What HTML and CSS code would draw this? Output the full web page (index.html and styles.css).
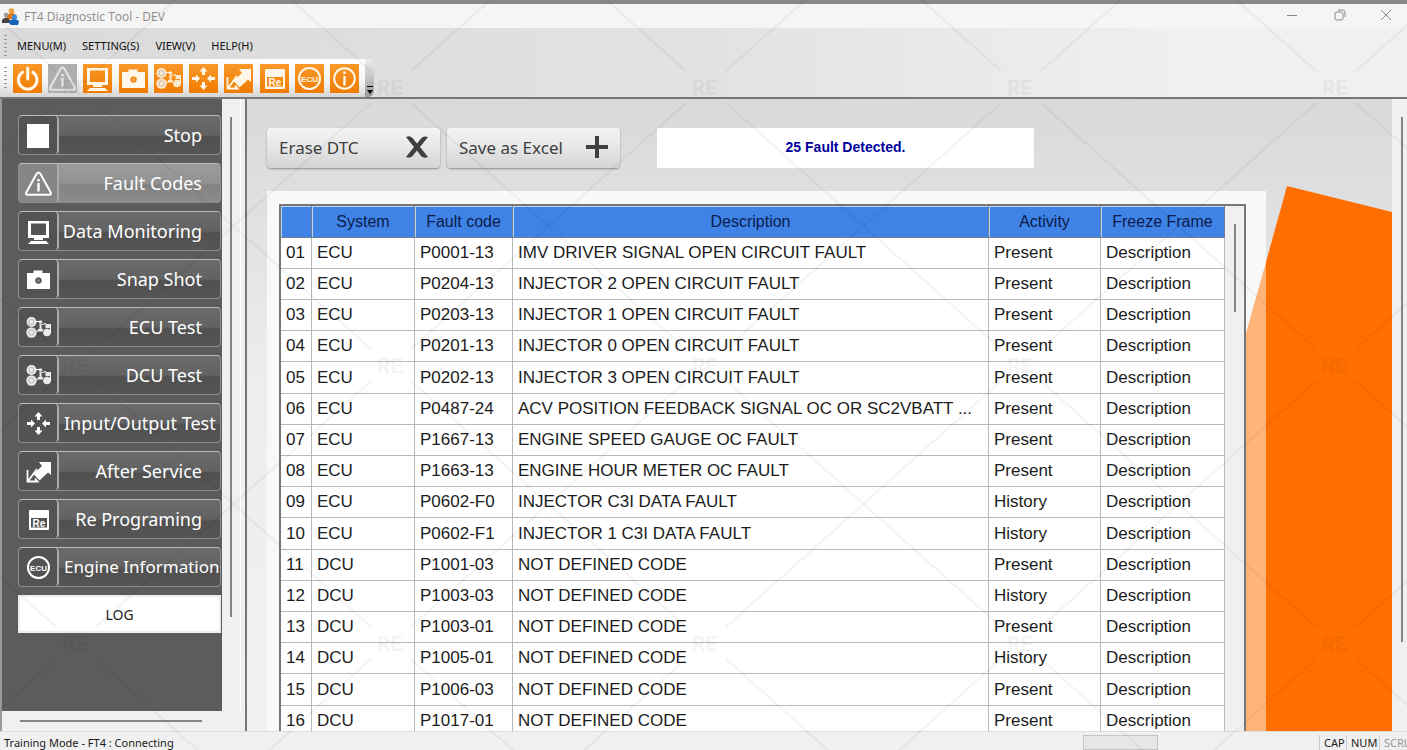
FILE: index.html
```html
<!DOCTYPE html>
<html lang="en">
<head>
    <meta charset="UTF-8">
    <meta name="viewport" content="width=device-width, initial-scale=1.0">
    <title>FT4 Diagnostic Tool - DEV</title>
    <link rel="stylesheet" href="styles.css">
</head>
<body>
    <!-- Icon set shared by the toolbar and the side menu -->
    <svg class="icon-defs" aria-hidden="true">
        <symbol id="i-power" viewBox="0 0 29 29">
            <path d="M9.5 8.2a9.3 9.3 0 1 0 10.4 0" fill="none" stroke="currentColor" stroke-width="3" stroke-linecap="round"/>
            <path d="M14.7 4v11" stroke="currentColor" stroke-width="3" stroke-linecap="round"/>
        </symbol>
        <symbol id="i-stop" viewBox="0 0 29 29"><rect x="3" y="3" width="22" height="24" fill="currentColor"/></symbol>
        <symbol id="i-warn" viewBox="0 0 29 29">
            <path d="M12.6 4.8 2.4 23.2q-1.2 2.6 1.4 2.6h21.4q2.6 0 1.4-2.6L16.4 4.8q-1.9-2.4-3.8 0z" fill="none" stroke="currentColor" stroke-width="2"/>
            <path d="M14.5 10v2.4M14.5 14v8.5" stroke="currentColor" stroke-width="2.4"/>
        </symbol>
        <symbol id="i-monitor" viewBox="0 0 29 29">
            <path d="M4 4h21v17H4zM7 6.5v11.5h15V6.5z" fill="currentColor" fill-rule="evenodd"/>
            <path d="M10 21h9v2h-9zM7 24h15l3 3H4z" fill="currentColor"/>
        </symbol>
        <symbol id="i-camera" viewBox="0 0 29 29">
            <path d="M3 8h6.500V5.500h9V8H26v16H3zM14.500 12.200a3.300 3.300 0 1 0 .01 0z" fill="currentColor" fill-rule="evenodd"/>
            <circle cx="14.500" cy="15.500" r="1.500" fill="currentColor" opacity=".3"/>
        </symbol>
        <symbol id="i-test" viewBox="0 0 29 29">
            <g fill="currentColor" opacity=".88">
                <circle cx="7.500" cy="9" r="5"/><circle cx="7.500" cy="19.500" r="5.200"/><circle cx="23" cy="19.500" r="3.800"/>
                <circle cx="16.500" cy="9" r="1.800"/><path d="M14 16h5v2.500h-5zM15.500 11h2v5h-2zM21.500 11H27v4h-5.500z"/>
            </g>
            <path d="M11 8.500h5M18 11.500l4-1M12 18.500l3-1M26.500 14v6" fill="none" stroke="currentColor"/>
            <g fill="none" stroke="#555" stroke-opacity=".35"><circle cx="7.500" cy="9" r="2.700"/><circle cx="7.500" cy="19.500" r="2.700"/></g>
        </symbol>
        <symbol id="i-move" viewBox="0 0 29 29">
            <path d="M14.500 3l4 4.500H16V11h-3V7.500h-2.500zM14.500 26l4-4.500H16V18h-3v3.500h-2.500zM18 14.500l4-4V13h4v3h-4v2.500zM11 14.500l-4-4V13H3v3h4v2.500z" fill="currentColor"/>
        </symbol>
        <symbol id="i-service" viewBox="0 0 29 29">
            <path d="M27 5v13l-3-2.500-8.500 8-6-6.500 8.500-8L15 5z" fill="currentColor"/>
            <path d="M3.500 13v11.500h10l-2.500-3M4.500 23.500 13 12" fill="none" stroke="currentColor" stroke-width="1.800"/>
        </symbol>
        <symbol id="i-re" viewBox="0 0 29 29">
            <path d="M6 5h18q1 0 1 1v18q0 1-1 1H6q-1 0-1-1V6q0-1 1-1zM7 13v9.500h16V13z" fill="currentColor" fill-rule="evenodd"/>
            <text x="15" y="21.500" font-family="Liberation Sans, sans-serif" font-size="10" font-weight="bold" text-anchor="middle" fill="currentColor">Re</text>
        </symbol>
        <symbol id="i-ecu" viewBox="0 0 29 29">
            <circle cx="14.500" cy="14.500" r="10.500" fill="none" stroke="currentColor" stroke-width="2"/>
            <text x="14.500" y="17.500" font-family="Liberation Sans, sans-serif" font-size="8" font-weight="bold" text-anchor="middle" fill="currentColor">ECU</text>
        </symbol>
        <symbol id="i-info" viewBox="0 0 29 29">
            <circle cx="14.500" cy="14.500" r="10.300" fill="none" stroke="currentColor" stroke-width="2"/>
            <path d="M14.500 7.500v2.500M14.500 12v9.500" stroke="currentColor" stroke-width="2.400"/>
        </symbol>
    </svg>

    <header class="titlebar">
        <svg class="app-icon" viewBox="0 0 17 17" aria-hidden="true">
            <circle cx="9.500" cy="3" r="2.800" fill="#f0a040"/>
            <path d="M5 11V7q5-4 9 0v4z" fill="#e07818"/>
            <circle cx="4" cy="7" r="2.200" fill="#999"/>
            <path d="M0 15v-3q4-5 8 0v3z" fill="#444"/>
            <circle cx="12.500" cy="9" r="2.600" fill="#3c8fe0"/>
            <path d="M7 15v-2q5-4 10 0l-1 4H9z" fill="#1763b5"/>
        </svg>
        <span class="app-name">FT4 Diagnostic Tool - DEV</span>
        <div class="window-buttons">
            <button type="button" aria-label="Minimize"><svg viewBox="0 0 12 12"><path d="M1 6.500h10"/></svg></button>
            <button type="button" aria-label="Restore"><svg viewBox="0 0 12 12"><rect x="1" y="3" width="8" height="8" rx="2"/><path d="M4 1h4.500q2.500 0 2.500 2.500V8"/></svg></button>
            <button type="button" aria-label="Close"><svg viewBox="0 0 12 12"><path d="M1 1l10 10M11 1L1 11"/></svg></button>
        </div>
    </header>

    <div class="bars">
        <nav class="menubar">
            <span class="grip"></span>
            <button type="button">MENU(M)</button>
            <button type="button">SETTING(S)</button>
            <button type="button">VIEW(V)</button>
            <button type="button">HELP(H)</button>
        </nav>
        <div class="toolbar">
            <span class="grip"></span>
            <div class="tools">
                <button type="button" class="tool" aria-label="Power"><svg><use href="#i-power"/></svg></button>
                <button type="button" class="tool disabled" aria-label="Fault Codes"><svg><use href="#i-warn"/></svg></button>
                <button type="button" class="tool" aria-label="Data Monitoring"><svg><use href="#i-monitor"/></svg></button>
                <button type="button" class="tool" aria-label="Snap Shot"><svg><use href="#i-camera"/></svg></button>
                <button type="button" class="tool" aria-label="Test"><svg><use href="#i-test"/></svg></button>
                <button type="button" class="tool" aria-label="Input/Output Test"><svg><use href="#i-move"/></svg></button>
                <button type="button" class="tool" aria-label="After Service"><svg><use href="#i-service"/></svg></button>
                <button type="button" class="tool" aria-label="Re Programing"><svg><use href="#i-re"/></svg></button>
                <button type="button" class="tool" aria-label="Engine Information"><svg><use href="#i-ecu"/></svg></button>
                <button type="button" class="tool" aria-label="Info"><svg><use href="#i-info"/></svg></button>
            </div>
            <button type="button" class="tool-more" aria-label="More"><svg viewBox="0 0 6 8"><path d="M0 0h6v1H0zM0 4h6L3 8z"/></svg></button>
        </div>
    </div>

    <main class="workspace">
        <aside class="sidebar">
            <div class="side-top">
                <nav class="side-menu">
                    <button type="button" class="side-btn"><span class="side-icon"><svg><use href="#i-stop"/></svg></span><span class="side-label">Stop</span></button>
                    <button type="button" class="side-btn active"><span class="side-icon"><svg><use href="#i-warn"/></svg></span><span class="side-label">Fault Codes</span></button>
                    <button type="button" class="side-btn"><span class="side-icon"><svg><use href="#i-monitor"/></svg></span><span class="side-label">Data Monitoring</span></button>
                    <button type="button" class="side-btn"><span class="side-icon"><svg><use href="#i-camera"/></svg></span><span class="side-label">Snap Shot</span></button>
                    <button type="button" class="side-btn"><span class="side-icon"><svg><use href="#i-test"/></svg></span><span class="side-label">ECU Test</span></button>
                    <button type="button" class="side-btn"><span class="side-icon"><svg><use href="#i-test"/></svg></span><span class="side-label">DCU Test</span></button>
                    <button type="button" class="side-btn"><span class="side-icon"><svg><use href="#i-move"/></svg></span><span class="side-label long">Input/Output Test</span></button>
                    <button type="button" class="side-btn"><span class="side-icon"><svg><use href="#i-service"/></svg></span><span class="side-label">After Service</span></button>
                    <button type="button" class="side-btn"><span class="side-icon"><svg><use href="#i-re"/></svg></span><span class="side-label">Re Programing</span></button>
                    <button type="button" class="side-btn"><span class="side-icon"><svg><use href="#i-ecu"/></svg></span><span class="side-label long small">Engine Information</span></button>
                    <button type="button" class="log-btn">LOG</button>
                </nav>
                <div class="vscroll"><span class="thumb side-thumb"></span></div>
            </div>
            <div class="hscroll"><span class="hthumb"></span></div>
        </aside>

        <section class="content">
            <div class="actions">
                <button type="button" class="action">Erase DTC
                    <svg viewBox="0 0 24 24"><path d="M1 2q4-2 6.500 1L12 8.500 16.500 3q2-2.500 6.500-1l-8 10 8 10q-4.500 2-7-1L12 15.500 7.500 21q-2 2.500-6.500 1l8-10z"/></svg>
                </button>
                <button type="button" class="action">Save as Excel
                    <svg viewBox="0 0 24 24"><path d="M10 1h4v9h9v4h-9v9h-4v-9H1v-4h9z"/></svg>
                </button>
                <div class="detected">25 Fault Detected.</div>
            </div>

            <div class="panel">
                <div class="grid-box">
                    <table class="faults">
                        <colgroup>
                            <col class="c-no"><col class="c-system"><col class="c-code"><col><col class="c-activity"><col class="c-frame">
                        </colgroup>
                        <thead>
                            <tr><th></th><th>System</th><th>Fault code</th><th>Description</th><th>Activity</th><th>Freeze Frame</th></tr>
                        </thead>
                        <tbody>
                            <tr><td>01</td><td>ECU</td><td>P0001-13</td><td>IMV DRIVER SIGNAL OPEN CIRCUIT FAULT</td><td>Present</td><td>Description</td></tr>
                            <tr><td>02</td><td>ECU</td><td>P0204-13</td><td>INJECTOR 2 OPEN CIRCUIT FAULT</td><td>Present</td><td>Description</td></tr>
                            <tr><td>03</td><td>ECU</td><td>P0203-13</td><td>INJECTOR 1 OPEN CIRCUIT FAULT</td><td>Present</td><td>Description</td></tr>
                            <tr><td>04</td><td>ECU</td><td>P0201-13</td><td>INJECTOR 0 OPEN CIRCUIT FAULT</td><td>Present</td><td>Description</td></tr>
                            <tr><td>05</td><td>ECU</td><td>P0202-13</td><td>INJECTOR 3 OPEN CIRCUIT FAULT</td><td>Present</td><td>Description</td></tr>
                            <tr><td>06</td><td>ECU</td><td>P0487-24</td><td>ACV POSITION FEEDBACK SIGNAL OC OR SC2VBATT ...</td><td>Present</td><td>Description</td></tr>
                            <tr><td>07</td><td>ECU</td><td>P1667-13</td><td>ENGINE SPEED GAUGE OC FAULT</td><td>Present</td><td>Description</td></tr>
                            <tr><td>08</td><td>ECU</td><td>P1663-13</td><td>ENGINE HOUR METER OC FAULT</td><td>Present</td><td>Description</td></tr>
                            <tr><td>09</td><td>ECU</td><td>P0602-F0</td><td>INJECTOR C3I DATA FAULT</td><td>History</td><td>Description</td></tr>
                            <tr><td>10</td><td>ECU</td><td>P0602-F1</td><td>INJECTOR 1 C3I DATA FAULT</td><td>History</td><td>Description</td></tr>
                            <tr><td>11</td><td>DCU</td><td>P1001-03</td><td>NOT DEFINED CODE</td><td>Present</td><td>Description</td></tr>
                            <tr><td>12</td><td>DCU</td><td>P1003-03</td><td>NOT DEFINED CODE</td><td>History</td><td>Description</td></tr>
                            <tr><td>13</td><td>DCU</td><td>P1003-01</td><td>NOT DEFINED CODE</td><td>Present</td><td>Description</td></tr>
                            <tr><td>14</td><td>DCU</td><td>P1005-01</td><td>NOT DEFINED CODE</td><td>History</td><td>Description</td></tr>
                            <tr><td>15</td><td>DCU</td><td>P1006-03</td><td>NOT DEFINED CODE</td><td>Present</td><td>Description</td></tr>
                            <tr><td>16</td><td>DCU</td><td>P1017-01</td><td>NOT DEFINED CODE</td><td>Present</td><td>Description</td></tr>
                        </tbody>
                    </table>
                    <div class="vscroll"><span class="thumb grid-thumb"></span></div>
                </div>
            </div>

            <!-- Orange corner shape, paler where it crosses the panel -->
            <svg class="corner" aria-hidden="true">
                <path d="M20 76 0 147V3000h20z" fill="#ffb579"/>
                <path d="M41 0 146 26V3000H20V76z" fill="#ff6e00"/>
            </svg>
        </section>
        <div class="vscroll page-scroll"><span class="thumb page-thumb"></span></div>
    </main>

    <footer class="statusbar">
        <span class="status-text">Training Mode - FT4 : Connecting</span>
        <span class="status-box"></span>
        <span class="key cap">CAP</span>
        <span class="key num">NUM</span>
        <span class="key scrl">SCRL</span>
    </footer>

    <!-- Watermark over the whole window -->
    <svg class="watermark" aria-hidden="true">
        <pattern id="wm" width="315" height="278" patternUnits="userSpaceOnUse" patternTransform="translate(76 87)">
            <path d="M20 16 295 262M295 16 20 262" fill="none" stroke="#000" stroke-width="2"/>
        </pattern>
        <pattern id="wm-text" width="315" height="278" patternUnits="userSpaceOnUse" patternTransform="translate(58 70)">
            <text x="4" y="25" font-family="Liberation Mono, monospace" font-size="22" font-weight="bold">RE</text>
        </pattern>
        <rect width="100%" height="100%" fill="url(#wm)"/>
        <rect width="100%" height="100%" fill="url(#wm-text)"/>
    </svg>
</body>
</html>
```
FILE: styles.css
```css
* {
    box-sizing: border-box;
}
body {
    margin: 0;
    height: 100vh;
    display: flex;
    flex-direction: column;
    overflow: hidden;
    background: #f0f0f0;
    color: #1a1a1a;
    font-family: "Noto Sans", "Open Sans", sans-serif;
    font-size: 12px;
    border-top: 4px solid #888;
}
button {
    font: inherit;
    color: inherit;
    border: none;
    background: none;
    padding: 0;
    cursor: pointer;
}
svg {
    display: block;
}
.icon-defs {
    display: none;
}

/* Title bar */
.titlebar {
    display: flex;
    align-items: center;
    height: 24px;
    padding-left: 2px;
    background: #f5f5f5;
}
.app-icon {
    width: 17px;
    height: 17px;
}
.app-name {
    flex: 1;
    padding-left: 5px;
    color: #8c8c8c;
    font-family: "Open Sans", sans-serif;
}
.window-buttons {
    display: flex;
}
.window-buttons button {
    display: grid;
    place-items: center;
    width: 48px;
    height: 24px;
    padding-bottom: 2px;
}
.window-buttons button:last-child {
    width: 43px;
}
.window-buttons svg {
    width: 12px;
    height: 12px;
    fill: none;
    stroke: #8a8a8a;
}

/* Menu and toolbar */
.bars {
    background: linear-gradient(90deg, #dadada, #e2e2e2 50%, #f0f0f0 85%);
    border-bottom: 2px solid #777;
}
.menubar {
    display: flex;
    align-items: center;
    gap: 16px;
    height: 31px;
    padding: 4px 0 0 4px;
    font-size: 11px;
    color: #111;
}
.grip {
    width: 3px;
    height: 22px;
    background: repeating-linear-gradient(#999 0 1px, transparent 1px 4px);
}
.menubar .grip {
    margin-right: -6px;
}
.toolbar {
    display: flex;
    align-items: center;
    gap: 6px;
    width: 374px;
    height: 38px;
    padding-left: 4px;
    border-radius: 0 6px 6px 0;
    background: linear-gradient(#fff, #f4f4f4 60%, #d6d6d6);
}
.tools {
    flex: 1;
    display: flex;
    justify-content: space-between;
}
.tool {
    width: 29px;
    height: 29px;
    color: #fff8ea;
    background: linear-gradient(#f9982a, #f07c00);
}
.tool svg {
    width: 29px;
    height: 29px;
}
.tool.disabled {
    color: #e4e4e4;
    background: #aeaeae;
}
.tool-more {
    display: flex;
    align-items: flex-end;
    justify-content: center;
    align-self: stretch;
    width: 9px;
    padding-bottom: 3px;
    border-radius: 0 6px 6px 0;
    background: linear-gradient(#eee, #999);
}
.tool-more svg {
    width: 6px;
    height: 8px;
}

/* Work area */
.workspace {
    flex: 1;
    min-height: 0;
    display: flex;
}
.vscroll {
    display: flex;
    justify-content: center;
    background: #f0f0f0;
}
.thumb {
    width: 2px;
    background: #858585;
}

/* Side menu */
.sidebar {
    display: flex;
    flex-direction: column;
    width: 247px;
    flex-shrink: 0;
    border-left: 2px solid #999;
    border-right: 2px solid #777;
    background: #f0f0f0;
}
.side-top {
    flex: 1;
    min-height: 0;
    display: flex;
}
.side-menu {
    display: flex;
    flex-direction: column;
    gap: 8px;
    width: 220px;
    padding: 16px 1px 0 16px;
    background: #5d5c5a;
}
.side-top .vscroll {
    width: 19px;
    border-right: 1px solid #fff;
}
.side-thumb {
    height: 500px;
    margin-top: 18px;
}
.side-btn {
    display: flex;
    flex-shrink: 0;
    height: 40px;
    overflow: hidden;
    color: #fff;
    font-size: 18px;
    border: 1px solid #8d8d8d;
    border-top-color: #bbb;
    border-radius: 4px;
    background: linear-gradient(#6b6b6b, #626262 50%, #505050 55%, #565656);
}
.side-btn.active {
    background: linear-gradient(#9c9c9c, #929292 50%, #828282 55%, #8c8c8c);
}
.side-icon {
    display: grid;
    place-items: center;
    width: 40px;
    height: 100%;
    flex-shrink: 0;
    border-right: 2px solid #aaa;
    border-radius: 4px;
    background: #535353;
}
.active .side-icon {
    background: #868686;
}
.side-icon svg {
    width: 29px;
    height: 29px;
}
.side-label {
    flex: 1;
    min-width: 0;
    padding-right: 18px;
    line-height: 38px;
    text-align: right;
    white-space: nowrap;
}
.side-label.long {
    padding: 0 0 0 5px;
    text-align: left;
}
.side-label.small {
    font-size: 17px;
}
.log-btn {
    flex-shrink: 0;
    height: 38px;
    color: #222;
    font-size: 14px;
    background: #fff;
    box-shadow: inset 0 0 0 2px #eee;
}
.hscroll {
    display: flex;
    align-items: center;
    height: 20px;
    padding-left: 18px;
}
.hthumb {
    width: 182px;
    height: 2px;
    background: #858585;
}

/* Content */
.content {
    position: relative;
    flex: 1;
    min-width: 0;
    display: flex;
    flex-direction: column;
    gap: 23px;
    padding: 29px 126px 0 20px;
    overflow: hidden;
    background: linear-gradient(#d8d9da, #dfe0e2 18%, #eceeee 45%, #f0f1f1);
}
.actions {
    display: flex;
    gap: 7px;
    flex-shrink: 0;
}
.action {
    display: flex;
    align-items: center;
    justify-content: space-between;
    width: 173px;
    height: 40px;
    padding: 0 11px 2px 12px;
    color: #3f3f3f;
    font-size: 17px;
    border-radius: 4px;
    background: linear-gradient(#f4f4f4, #e6e6e6 50%, #d4d4d4);
    box-shadow: 0 1px 2px #8c8c8c;
}
.action svg {
    width: 24px;
    height: 24px;
    fill: #3f3f3f;
}
.detected {
    width: 377px;
    margin-left: 30px;
    line-height: 38px;
    text-align: center;
    color: #00009c;
    font-family: "Liberation Sans", Arial, sans-serif;
    font-size: 14px;
    font-weight: bold;
    background: #fff;
}
.panel {
    flex: 1;
    min-height: 0;
    display: flex;
    padding: 13px 20px 0 12px;
    background: #f8f8f8;
}
.grid-box {
    flex: 1;
    min-width: 0;
    display: flex;
    border: 2px solid #777;
    border-bottom: none;
    background: #f0f0f0;
    overflow: hidden;
}
.grid-box .vscroll {
    width: 19px;
}
.grid-thumb {
    height: 88px;
    margin-top: 18px;
}
.faults {
    flex: 1;
    width: 100%;
    height: 1px;
    table-layout: fixed;
    border-collapse: separate;
    border-spacing: 0;
    color: #1c1c1c;
    font-family: "Liberation Sans", Arial, sans-serif;
    font-size: 17px;
}
.c-no { width: 31px; }
.c-system { width: 103px; }
.c-code { width: 98px; }
.c-activity { width: 112px; }
.c-frame { width: 124px; }
.faults th {
    height: 32px;
    padding: 0;
    font-size: 16px;
    font-weight: normal;
    color: #0c1c4c;
    border: 1px solid #6f7f99;
    border-width: 0 1px 1px 0;
    box-shadow: inset 1px 1px #b9d4f5;
    background: #3f83e6;
}
.faults td {
    height: 31px;
    padding: 0 0 0 5px;
    overflow: hidden;
    white-space: nowrap;
    border: 1px solid #b9b9b9;
    border-width: 0 1px 1px 0;
    background: #fff;
}
.faults tr:nth-child(5n) td {
    height: 32px;
}
.corner {
    position: absolute;
    top: 87px;
    right: 0;
    width: 146px;
    height: 100%;
}
.page-scroll {
    width: 15px;
    flex-shrink: 0;
    padding-left: 4px;
}
.page-thumb {
    height: 525px;
    margin-top: 18px;
}

/* Status bar */
.statusbar {
    display: flex;
    align-items: flex-end;
    height: 19px;
    padding-left: 4px;
    border-top: 1px solid #ddd;
    font-size: 11px;
    line-height: 15px;
    white-space: nowrap;
    overflow: hidden;
}
.status-text {
    flex: 1;
}
.status-box {
    width: 75px;
    height: 15px;
    margin-right: 161px;
    border: 1px solid #c4c4c4;
    background: #e6e6e6;
}
.key {
    flex-shrink: 0;
    padding-left: 4px;
    border-left: 1px solid #ccc;
}
.cap { width: 27px; }
.num { width: 33px; }
.scrl {
    width: 28px;
    color: #999;
    overflow: hidden;
}

.watermark {
    position: absolute;
    top: 0;
    left: 0;
    width: 100%;
    height: 100%;
    opacity: .04;
    pointer-events: none;
}
```
